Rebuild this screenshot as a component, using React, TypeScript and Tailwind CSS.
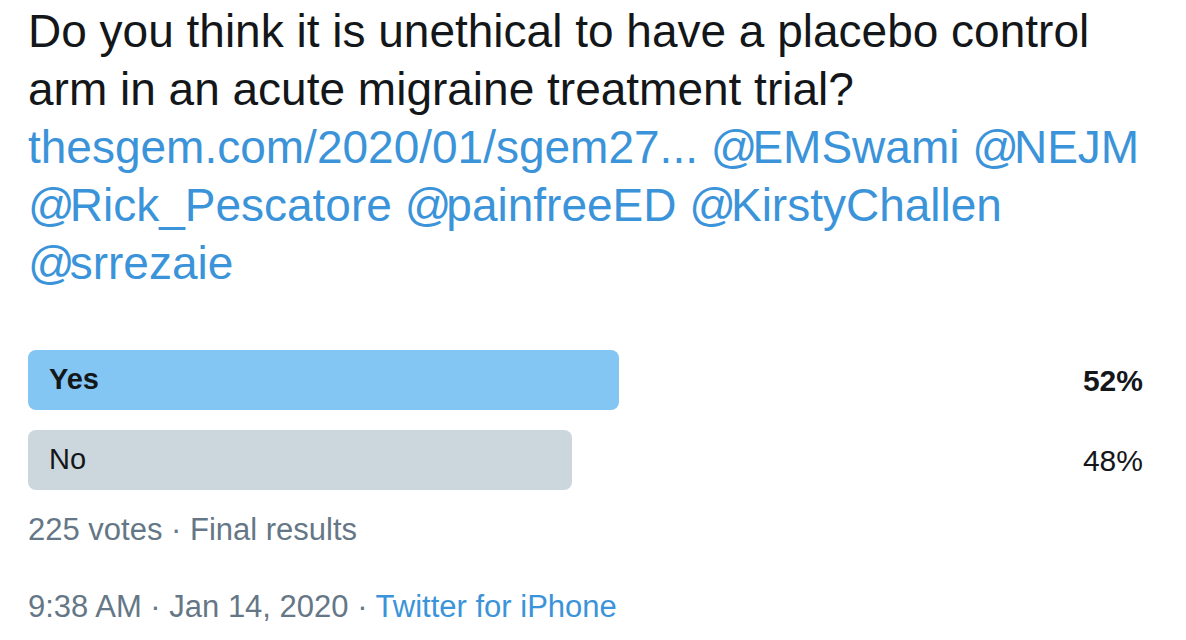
function At() {
  return <span className="tracking-[-5px]">@</span>
}

export default function App() {
  const options = [
    { label: 'Yes', pct: 52, width: 591, winner: true },
    { label: 'No', pct: 48, width: 544, winner: false },
  ]

  return (
    <div className="min-h-screen bg-white px-[28px] pt-[2px] text-[#14171a]" style={{ fontFamily: '"Liberation Sans", Arial, sans-serif' }}>
      {/* Tweet text */}
      <p className="text-[46px] leading-[58px] w-[1140px]">
        Do you think it is unethical to have a placebo control arm in an acute migraine treatment trial?
        <br />
        <span className="text-[#3b94d9]">
          thesgem.com/2020/01/sgem27... <At />EMSwami <At />NEJM
          <br />
          <At />Rick_Pescatore <At />painfreeED <At />KirstyChallen
          <br />
          <At />srrezaie
        </span>
      </p>

      {/* Poll */}
      <div className="mt-[58px] flex flex-col gap-[20px] w-[1115px]">
        {options.map((o) => (
          <div key={o.label} className="flex items-center justify-between h-[60px]">
            <div
              className={`h-full rounded-[8px] flex items-center pl-[21px] text-[29px] ${o.winner ? 'bg-[#84c6f3] font-bold' : 'bg-[#ccd6dd]'}`}
              style={{ width: o.width }}
            >
              {o.label}
            </div>
            <span className={`text-[30px] ${o.winner ? 'font-bold' : ''}`}>{o.pct}%</span>
          </div>
        ))}
      </div>

      <div className="mt-[22px] text-[31px] text-[#657786] leading-[36px]">225 votes · Final results</div>

      <div className="mt-[41px] text-[31px] text-[#657786] leading-[36px]">
        9:38 AM · Jan 14, 2020 · <span className="text-[#3b94d9]">Twitter for iPhone</span>
      </div>
    </div>
  )
}
